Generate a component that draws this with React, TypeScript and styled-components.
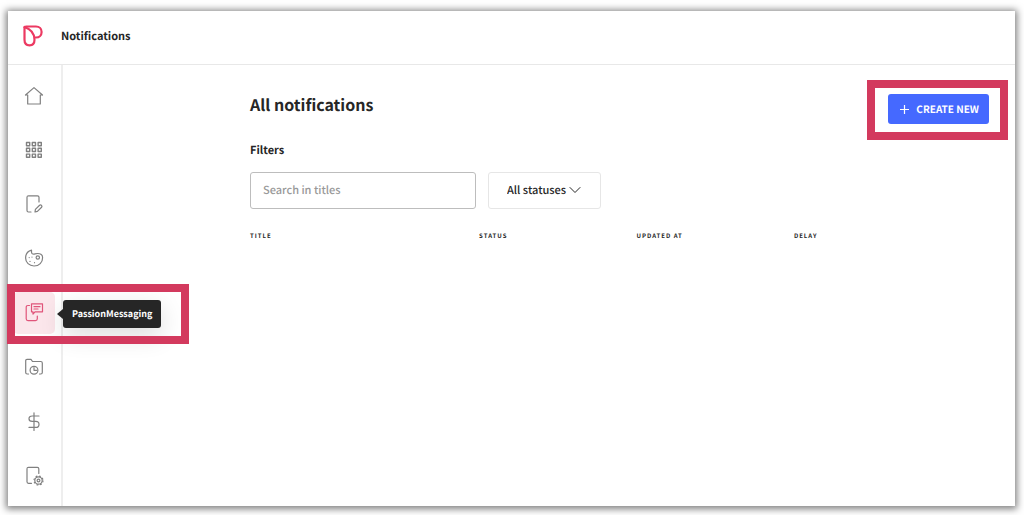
import React from "react";
import styled, { createGlobalStyle, css } from "styled-components";

const GlobalStyle = createGlobalStyle`
  *, *::before, *::after { box-sizing: border-box; }
  body {
    margin: 0;
    background: #fff;
    color: #262626;
    font-family: "Source Sans Pro", "Noto Sans CJK SC", "Noto Sans", sans-serif;
    font-size: 11px;
    line-height: 18px;
    text-rendering: geometricPrecision;
  }
  button, input, select { font: inherit; color: inherit; text-rendering: inherit; }
`;

const Page = styled.div`
  min-height: 100vh;
  padding: 11px 9px 9px 8px;
  display: flex;
`;

const Window = styled.div`
  flex: 1;
  display: flex;
  flex-direction: column;
  background: #fff;
  box-shadow: 0 1px 7px 2px rgba(0, 0, 0, 0.5);
`;

const Header = styled.header`
  display: flex;
  align-items: center;
  gap: 18px;
  height: 54px;
  padding: 0 15px 3px;
  border-bottom: 1px solid #e8e8e8;
`;

const HeaderTitle = styled.span`
  font-weight: 700;
`;

const Logo = styled.svg`
  width: 20px;
  height: 22px;
`;

const Body = styled.div`
  flex: 1;
  display: flex;
`;

const Sidebar = styled.nav`
  flex: none;
  width: 55px;
  padding: 4px 1px 3px 0;
  display: grid;
  grid-auto-rows: 1fr;
  align-items: center;
  justify-items: center;
  border-right: 2px solid #eee;
`;

const NavItem = styled.div`
  position: relative;
`;

const NavLink = styled.a<{ $active?: boolean }>`
  display: grid;
  place-items: center;
  width: 42px;
  height: 42px;
  border-radius: 5px;
  color: #808080;
  ${(p) =>
    p.$active &&
    css`
      color: #e0547a;
      background: #fbe6eb;
    `}
`;

const Icon = styled.svg`
  width: 20px;
  height: 20px;
  fill: none;
  stroke: currentColor;
  stroke-width: 1.2;
  stroke-linecap: round;
  stroke-linejoin: round;
`;

const highlight = css`
  position: absolute;
  border: 8px solid #d33a5e;
  pointer-events: none;
`;

const NavHighlight = styled.div`
  ${highlight}
  top: -8px;
  left: -6px;
  width: 182px;
  height: 60px;
`;

const ActionHighlight = styled.div`
  ${highlight}
  inset: -14px -19px -16px -21px;
`;

const Tooltip = styled.div`
  position: absolute;
  top: 8px;
  left: 50px;
  padding: 5px 9px;
  border-radius: 3px;
  background: #262626;
  color: #fff;
  font-size: 9px;
  font-weight: 700;
  white-space: nowrap;
  box-shadow: 0 8px 24px rgba(0, 0, 0, 0.14);
  &::before {
    content: "";
    position: absolute;
    top: 50%;
    right: 100%;
    transform: translateY(-50%);
    border: 5px solid transparent;
    border-right: 6px solid #262626;
    border-left: 0;
  }
`;

const Main = styled.main`
  flex: 1;
  padding: 29px 26px 24px 187px;
`;

const TitleRow = styled.div`
  display: flex;
  align-items: flex-start;
  justify-content: space-between;
`;

const Title = styled.h1`
  margin: 0;
  font-size: 16px;
  line-height: 20px;
  font-weight: 700;
`;

const Action = styled.div`
  position: relative;
`;

const CreateButton = styled.button`
  display: flex;
  align-items: center;
  gap: 7px;
  height: 30px;
  padding: 0 10px 0 12px;
  border: 0;
  border-radius: 3px;
  background: #4569ff;
  color: #fff;
  font-size: 10px;
  font-weight: 700;
  white-space: nowrap;
`;

const PlusIcon = styled(Icon)`
  width: 9px;
  height: 9px;
`;

const FiltersTitle = styled.h2`
  margin: 17px 0 13px;
  font-size: 11px;
  line-height: 18px;
  font-weight: 700;
`;

const Filters = styled.div`
  display: flex;
  gap: 12px;
`;

const Search = styled.input`
  width: 226px;
  height: 37px;
  padding: 0 12px 1px;
  border: 1px solid #bdbdbd;
  border-radius: 3px;
  background: #fff;
  font-weight: 500;
  font-size: 11px;
  &::placeholder {
    color: #999;
    opacity: 1;
  }
`;

const SelectBox = styled.div`
  position: relative;
  width: 113px;
`;

const Select = styled.select`
  appearance: none;
  width: 100%;
  height: 37px;
  padding: 0 20px 2px 18px;
  border: 1px solid #e6e6e6;
  border-radius: 3px;
  background: #fff;
  font-size: 11px;
  font-weight: 500;
`;

const Chevron = styled(Icon)`
  position: absolute;
  top: 14px;
  right: 20px;
  width: 12px;
  height: 8px;
  stroke-width: 1;
  pointer-events: none;
`;

const Table = styled.table`
  width: 100%;
  margin-top: 18px;
  table-layout: fixed;
  border-collapse: collapse;
`;

const Th = styled.th<{ $width?: string }>`
  width: ${(p) => p.$width ?? "auto"};
  padding: 0;
  text-align: left;
  font-size: 6px;
  line-height: 18px;
  font-weight: 700;
  letter-spacing: 1px;
`;

const navItems = [
  {
    label: "Home",
    icon: <path d="M1.500 9 10 1.600 18.500 9M1.500 9h2.200v9h12.600V9h2.200" />,
  },
  {
    label: "Apps",
    icon: (
      <>
        {[2.5, 8.3, 14.1].map((y) =>
          [2.5, 8.3, 14.1].map((x) => (
            <rect key={`${x}-${y}`} x={x} y={y} width="3.200" height="3.200" strokeWidth="1.400" />
          )),
        )}
      </>
    ),
  },
  {
    label: "Content",
    icon: (
      <path d="M7 17H4.500Q3 17 3 15.500V2.300Q3 .8 4.500 .8h9Q15 .8 15 2.300V7M11 17l.4-2.600 4.200-4.100q1-.8 1.900.1t.1 1.900l-4.200 4.100z" />
    ),
  },
  {
    label: "Design",
    icon: (
      <>
        <path d="M7.500 1.200C4 2.200 1.600 5.200 1.600 9c0 4.500 3.700 8 8.400 8 5.200 0 8.600-3.600 8.600-8.300 0-3-1.900-4.200-5-4.200-2.500 0-3.700 1.200-5.300.3C7 3.900 7.700 2.300 7.500 1.200z" />
        <circle cx="13.800" cy="8.500" r="1.700" />
        <path d="M5.200 8.500v.1M6 12.300v.1M10.500 13.600v.1M8 8v.1" />
      </>
    ),
  },
  {
    label: "PassionMessaging",
    active: true,
    icon: (
      <>
        <path d="M5.500 2.500H4Q2.200 2.500 2.200 4.300v11.500q0 1.800 1.800 1.800h7.500q1.800 0 1.800-1.800V13" />
        <path d="M7.500.8h11v8h-7.500l-2 2.200V8.800H7.500zM10 3.700h6M10 6h4" />
      </>
    ),
  },
  {
    label: "Library",
    icon: (
      <>
        <path d="M4.500 17H3.200Q1.700 17 1.700 15.500V3.500Q1.700 2.300 3 2.300h4L8.500 4.500h8.300q1.500 0 1.500 1.500v9.500q0 1.500-1.500 1.500H15.500" />
        <circle cx="10" cy="13.300" r="3.900" />
        <path d="M10 10.500v2.800h2.800" />
      </>
    ),
  },
  {
    label: "Payments",
    icon: (
      <path d="M10 .8v17.600M15 4H8.200Q5 4 5 6.700t3.200 2.700h3.600Q15 9.400 15 12.400t-3.200 3H5" />
    ),
  },
  {
    label: "Settings",
    icon: (
      <>
        <path d="M7.500 17.300H4.500Q3 17.300 3 15.800V2.800Q3 1.300 4.500 1.300h8.800q1.500 0 1.500 1.500V7.500" />
        <circle cx="14.500" cy="14.500" r="3.700" />
        <circle cx="14.500" cy="14.500" r="1.400" />
        <circle cx="14.500" cy="14.500" r="4.500" strokeDasharray="1.770" strokeLinecap="butt" />
      </>
    ),
  },
];

export default function App() {
  return (
    <Page>
      <GlobalStyle />
      <Window>
        <Header>
          <Logo viewBox="0 0 20 22" fill="none" stroke="#ec3a62" strokeWidth="2.200" strokeLinejoin="round">
            <path d="M1.500 2.500v12.300c0 3.400 2 5.500 5 5.500s5-2.100 5-5.500C11.500 8.500 7.500 4 1.500 2z" />
            <path d="M1.500 3q0-1.500 1.800-1.500H13c3.300 0 5.600 2.200 5.600 5.400s-2.300 5.600-5.600 5.600h-2" />
          </Logo>
          <HeaderTitle>Notifications</HeaderTitle>
        </Header>
        <Body>
          <Sidebar aria-label="Main">
            {navItems.map((item) => (
              <NavItem key={item.label}>
                <NavLink href="#" aria-label={item.label} $active={item.active}>
                  <Icon viewBox="0 0 20 20">{item.icon}</Icon>
                </NavLink>
                {item.active && (
                  <>
                    <Tooltip role="tooltip">{item.label}</Tooltip>
                    <NavHighlight />
                  </>
                )}
              </NavItem>
            ))}
          </Sidebar>
          <Main>
            <TitleRow>
              <Title>All notifications</Title>
              <Action>
                <CreateButton type="button">
                  <PlusIcon viewBox="0 0 9 9">
                    <path d="M4.500 0v9M0 4.500h9" />
                  </PlusIcon>
                  CREATE NEW
                </CreateButton>
                <ActionHighlight />
              </Action>
            </TitleRow>
            <FiltersTitle>Filters</FiltersTitle>
            <Filters>
              <Search type="search" aria-label="Search in titles" placeholder="Search in titles" />
              <SelectBox>
                <Select aria-label="Status">
                  <option>All statuses</option>
                </Select>
                <Chevron viewBox="0 0 12 8">
                  <path d="M1 1.500l5 5 5-5" />
                </Chevron>
              </SelectBox>
            </Filters>
            <Table>
              <thead>
                <tr>
                  <Th $width="31%">TITLE</Th>
                  <Th $width="21.300%">STATUS</Th>
                  <Th $width="21.300%">UPDATED AT</Th>
                  <Th>DELAY</Th>
                </tr>
              </thead>
            </Table>
          </Main>
        </Body>
      </Window>
    </Page>
  );
}
